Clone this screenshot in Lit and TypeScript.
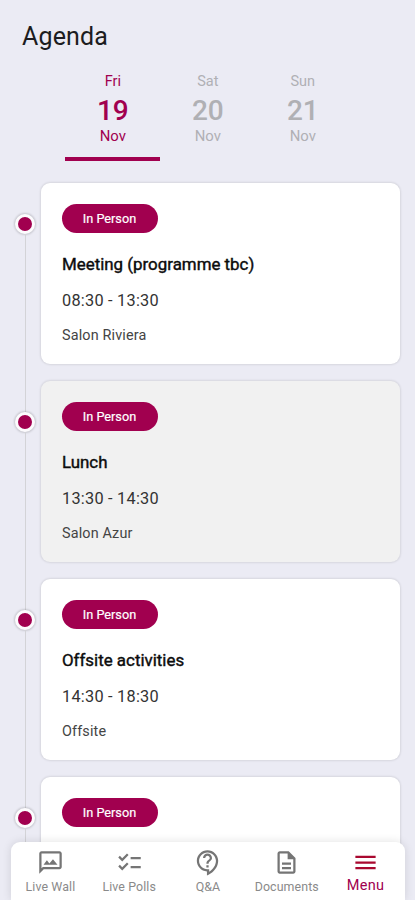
import { LitElement, html, css, svg } from "lit";
import { customElement, property } from "lit/decorators.js";
import { classMap } from "lit/directives/class-map.js";

const DAYS = [
  { name: "Fri", date: "19", month: "Nov", active: true },
  { name: "Sat", date: "20", month: "Nov", active: false },
  { name: "Sun", date: "21", month: "Nov", active: false },
];

const SESSIONS = [
  { title: "Meeting (programme tbc)", time: "08:30 - 13:30", place: "Salon Riviera", muted: false },
  { title: "Lunch", time: "13:30 - 14:30", place: "Salon Azur", muted: true },
  { title: "Offsite activities", time: "14:30 - 18:30", place: "Offsite", muted: false },
  { title: "", time: "", place: "", muted: false },
];

const ICONS = {
  wall: svg`<path d="M20 2H4c-1.1 0-1.99.9-1.99 2L2 22l4-4h14c1.1 0 2-.9 2-2V4c0-1.1-.9-2-2-2zm0 14H5.17L4 17.17V4h16v12z"/><path d="M5.8 14l3-4 2.2 2.8L14.2 9l4 5z"/>`,
  polls: svg`<path d="M22 7h-9v2h9V7zm0 8h-9v2h9v-2zM5.54 11L2 7.46l1.41-1.41 2.12 2.12 4.24-4.24 1.41 1.41L5.54 11zm0 8L2 15.46l1.41-1.41 2.12 2.12 4.24-4.24 1.41 1.41L5.54 19z"/>`,
  qa: svg`<path transform="translate(.5 0)" d="M11 23.59v-3.6c-5.01-.26-9-4.42-9-9.49C2 5.26 6.26 1 11.5 1S21 5.26 21 10.5c0 4.95-3.44 9.93-8.57 12.4l-1.43.69zM11.5 3C7.36 3 4 6.36 4 10.5S7.36 18 11.5 18H13v2.3c3.64-2.3 6-6.08 6-9.8C19 6.36 15.64 3 11.5 3zm-1 11.5h2v2h-2zm2-1.5h-2c0-3.25 3-3 3-5 0-1.1-.9-2-2-2s-2 .9-2 2h-2c0-2.21 1.79-4 4-4s4 1.79 4 4c0 2.5-3 2.75-3 5z"/>`,
  docs: svg`<path d="M8 16h8v2H8zm0-4h8v2H8zm6-10H6c-1.1 0-2 .9-2 2v16c0 1.1.89 2 1.99 2H18c1.1 0 2-.9 2-2V8l-6-6zm4 18H6V4h7v5h5v11z"/>`,
  menu: svg`<path d="M3 18h18v-2H3v2zm0-5h18v-2H3v2zm0-7v2h18V6H3z"/>`,
};

const NAV = [
  { label: "Live Wall", icon: ICONS.wall, active: false },
  { label: "Live Polls", icon: ICONS.polls, active: false },
  { label: "Q&A", icon: ICONS.qa, active: false },
  { label: "Documents", icon: ICONS.docs, active: false },
  { label: "Menu", icon: ICONS.menu, active: true },
];

@customElement("session-card")
class SessionCard extends LitElement {
  @property({ attribute: false }) session: any;

  static styles = css`
    :host { display: flex; height: 198px; }
    .rail { width: 40.5px; flex: none; display: flex; flex-direction: column; align-items: flex-start; box-sizing: border-box; padding-left: 10.4px; }
    .line { width: 1px; margin-left: 15px; background: #d3d3d7; }
    .top { height: 31px; }
    .hidden { background: transparent; }
    .rest { flex: 1; }
    .dot { width: 14px; height: 14px; margin-left: 5px; border-radius: 50%; background: #a1004f; border: 3px solid #fcfbfd; box-shadow: 0 0 2px 1px rgba(0,0,0,.15); flex: none; }
    .card { width: 359.5px; height: 181px; box-sizing: border-box; padding: 21px 21px 21px 21.5px; border-radius: 9px; background: #fff; box-shadow: 0 0 2px 1px rgba(0,0,0,.09); display: flex; flex-direction: column; align-items: flex-start; color: #333; }
    .muted { background: #f1f1f1; }
    .pill { height: 29.5px; width: 96px; border-radius: 15px; background: #a1004f; color: #fff; font-size: 12.7px; -webkit-text-stroke: .2px #fff; line-height: 29px; text-align: center; text-indent: -1px; }
    .title { margin-top: 19.5px; height: 24px; line-height: 24px; font-size: 16.9px; -webkit-text-stroke: .4px #0c0c0c; color: #0c0c0c; white-space: nowrap; }
    .time { margin-top: 13px; height: 24px; line-height: 24px; font-size: 16.3px; letter-spacing: .25px; }
    .place { margin-top: 12px; height: 22px; line-height: 22px; font-size: 14.4px; letter-spacing: .15px; color: #444; }
  `;

  render() {
    const s = this.session;
    return html`
      <div class="rail">
        <div class=${classMap({ line: true, top: true, hidden: s.first })}></div>
        <div class="dot"></div>
        <div class="line rest"></div>
      </div>
      <div class=${classMap({ card: true, muted: s.muted })}>
        <div class="pill">In Person</div>
        <div class="title">${s.title}</div>
        <div class="time">${s.time}</div>
        <div class="place">${s.place}</div>
      </div>`;
  }
}

@customElement("app-root")
class AppRoot extends LitElement {
  static styles = css`
    :host { display: block; position: relative; width: 415px; height: 900px; overflow: hidden; background: #ebebf4; font-family: Roboto, sans-serif; }
    .heading { margin: 0; padding: 21px 0 0 22px; height: 32px; line-height: 32px; font-size: 25px; font-weight: 400; letter-spacing: .15px; color: #1c1c20; }
    .days { display: flex; margin: 19px 0 0 65.3px; height: 89px; }
    .day { width: 95px; display: flex; flex-direction: column; align-items: center; color: #b0b0b4; border-bottom: 4px solid transparent; box-sizing: border-box; font-size: 14.5px; }
    .chosen { color: #a1004f; border-bottom-color: #a1004f; }
    .name { line-height: 20px; }
    .date { line-height: 36px; margin-top: 1px; font-size: 28px; font-weight: 500; }
    .month { line-height: 18px; margin-top: -2px; font-size: 14.9px; }
    .list { margin-top: 21.5px; }
    .nav { position: absolute; left: 11px; right: 10px; bottom: 0; height: 58px; display: flex; background: #fff; border-radius: 9px 9px 0 0; box-shadow: 0 0 10px rgba(0,0,0,.12); }
    .item { flex: 1 1 0; min-width: 0; display: flex; flex-direction: column; align-items: center; color: #757575; font-size: 12.4px; letter-spacing: .1px; padding-top: 7px; }
    .current { color: #a9082f; font-size: 14.5px; }
    .icon { width: 27px; height: 27px; fill: currentColor; }
    .label { line-height: 18px; margin-top: 2px; white-space: nowrap; color: #8a8a8a; }
    .current .label { color: #a1004f; margin-top: 1px; letter-spacing: .3px; }
  `;

  render() {
    return html`
      <h1 class="heading">Agenda</h1>
      <div class="days">
        ${DAYS.map((d) => html`<div class=${classMap({ day: true, chosen: d.active })}>
          <span class="name">${d.name}</span><span class="date">${d.date}</span><span class="month">${d.month}</span>
        </div>`)}
      </div>
      <div class="list">
        ${SESSIONS.map((s, i) => html`<session-card .session=${{ ...s, first: i === 0 }}></session-card>`)}
      </div>
      <nav class="nav">
        ${NAV.map((n) => html`<div class=${classMap({ item: true, current: n.active })}>
          <svg class="icon" viewBox="0 0 24 24">${n.icon}</svg>
          <span class="label">${n.label}</span>
        </div>`)}
      </nav>`;
  }
}
